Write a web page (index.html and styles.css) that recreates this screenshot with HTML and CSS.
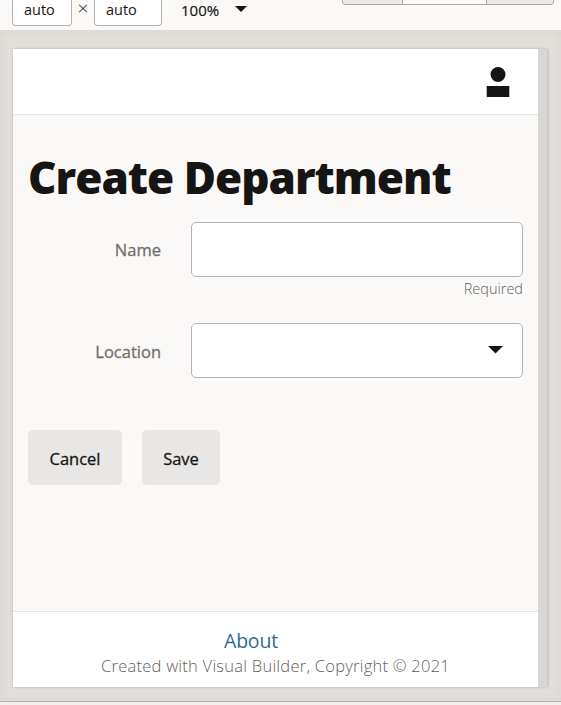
FILE: index.html
```html
<!DOCTYPE html>
<html lang="en">
<head>
<meta charset="utf-8">
<title>Create Department</title>
<link rel="stylesheet" href="styles.css">
</head>
<body>
<div class="toolbar">
  <div class="size"><span>auto</span></div>
  <span class="times">×</span>
  <div class="size size-wide"><span>auto</span></div>
  <span class="percent">100%</span>
  <svg class="tool-arrow" width="12" height="6" viewBox="0 0 12 6"><path d="M0 0H12L6 6Z"/></svg>
  <div class="modes"><i></i><i class="active"></i><i></i></div>
</div>
<div class="canvas">
  <div class="device">
    <div class="page">
      <header>
        <svg width="24" height="31" viewBox="0 0 24 31"><circle cx="12" cy="7.5" r="7.5"/><path d="M.7 19H23.3V30H.7Z"/></svg>
      </header>
      <main>
        <h1><span>Create Department</span></h1>
        <div class="row">
          <label><span class="name">Name</span></label>
          <div class="field"></div>
        </div>
        <div class="hint"><span>Required</span></div>
        <div class="row">
          <label class="lower"><span class="location">Location</span></label>
          <div class="field select"><svg width="15" height="8" viewBox="0 0 15 8"><path d="M0 0H15L7.5 7.5Z"/></svg></div>
        </div>
        <div class="actions">
          <button class="cancel"><span>Cancel</span></button>
          <button class="save"><span>Save</span></button>
        </div>
      </main>
      <footer>
        <a><span>About</span></a>
        <p><span>Created with Visual Builder, Copyright © 2021</span></p>
      </footer>
    </div>
    <div class="scrollbar"></div>
  </div>
</div>
<div class="bottom"></div>
</body>
</html>
```
FILE: styles.css
```css
* { box-sizing: border-box; }
body {
  margin: 0;
  width: 561px;
  height: 705px;
  overflow: hidden;
  display: flex;
  flex-direction: column;
  background: #f1efed;
  color: #161513;
  font-family: "Open Sans", "Noto Sans", sans-serif;
}
svg { display: block; fill: #161513; }
span { white-space: nowrap; }
.toolbar {
  display: flex;
  height: 30px;
  padding-left: 12px;
  background: #faf9f8;
  font-size: 14.5px;
  line-height: 20px;
}
.size {
  width: 60px;
  height: 26px;
  padding-left: 11px;
  border: 1px solid #b3b2b1;
  border-top: 0;
  border-radius: 0 0 4px 4px;
  background: #fff;
}
.size-wide { width: 68px; }
.times {
  width: 22px;
  text-align: center;
  line-height: 17px;
  font-size: 19px;
  font-weight: 300;
}
.percent {
  width: 54px;
  margin-left: 19px;
  font-size: 15px;
  -webkit-text-stroke: .2px #161513;
}
.tool-arrow { margin-top: 6px; }
.modes {
  display: flex;
  width: 212px;
  height: 5px;
  margin-left: 95px;
  border: 1px solid #aaa9a7;
  border-top: 0;
  border-radius: 0 0 4px 4px;
  overflow: hidden;
}
.modes i { width: 59px; background: #ebeae8; }
.modes .active {
  width: 85px;
  background: #faf9f8;
  border: 1px solid #aaa9a7;
  border-width: 0 1px;
}
.modes i:last-child { flex: 1; }
.canvas {
  height: 672px;
  padding: 19px 0 0 13px;
  border-bottom: 1px solid #b2b0ae;
  background: #e3e0db;
  box-shadow: inset 0 0 13px #d9d4d1;
}
.device {
  display: flex;
  width: 535px;
  height: 638px;
  box-shadow: 0 0 3px #b8b5b0;
}
.page { display: flex; flex-direction: column; width: 525px; background: #faf9f8; }
.scrollbar { flex: 1; background: #d8d7d3; border-right: 1px solid #cbc9c5; }
header {
  display: flex;
  justify-content: flex-end;
  height: 66px;
  padding: 18px 28px 0 0;
  border-bottom: 1px solid #e5e4e2;
  background: #fff;
}
main { flex: 1; padding: 0 15px; }
h1 {
  height: 107px;
  margin: 0;
  padding-top: 32px;
  font-size: 44px;
  font-weight: 800;
  line-height: 60px;
  letter-spacing: -1px;
}
.row { display: flex; height: 55px; }
label {
  width: 163px;
  padding-right: 30px;
  color: #716e6a;
  font-size: 16.5px;
  line-height: 56px;
  text-align: right;
  -webkit-text-stroke: .3px #716e6a;
}
.lower { line-height: 58px; }
.field {
  width: 332px;
  border: 1px solid #b3b3b3;
  border-radius: 5px;
  background: #fff;
}
.select { padding: 22px 0 0 296px; }
.hint {
  height: 46px;
  color: #625f5b;
  font-size: 14.5px;
  font-weight: 300;
  line-height: 24px;
  text-align: right;
}
.actions { display: flex; gap: 20px; margin-top: 52px; }
button {
  width: 94px;
  height: 55px;
  padding: 2px 0 0;
  border: 0;
  border-radius: 5px;
  background: #e8e7e5;
  color: #161513;
  font: 400 16.5px "Open Sans", "Noto Sans", sans-serif;
  -webkit-text-stroke: .3px #161513;
}
.save { width: 78px; }
footer {
  height: 76px;
  padding-top: 16px;
  border-top: 1px solid #e5e4e2;
  background: #fff;
}
footer a {
  display: block;
  padding-left: 211px;
  color: #2f6b8f;
  font-size: 19.5px;
  font-weight: 400;
  letter-spacing: -.2px;
  line-height: 26px;
}
footer p {
  margin: 0;
  padding-left: 88px;
  color: #625f5b;
  font-size: 16.5px;
  font-weight: 300;
  letter-spacing: .25px;
  line-height: 24px;
}
.bottom { flex: 1; }
```
